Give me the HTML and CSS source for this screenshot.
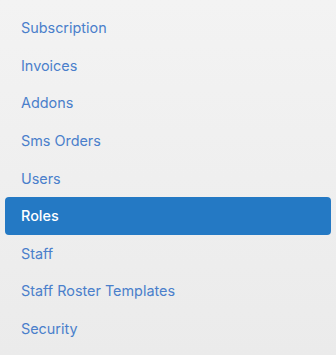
FILE: index.html
```html
<!DOCTYPE html>
<html lang="en">
<head>
    <meta charset="UTF-8">
    <meta name="viewport" content="width=device-width, initial-scale=1.0">
    <title>Settings</title>
    <link rel="stylesheet" href="styles.css">
</head>
<body>
    <nav class="side-menu">
        <a class="menu-item" href="#">Subscription</a>
        <a class="menu-item" href="#">Invoices</a>
        <a class="menu-item" href="#">Addons</a>
        <a class="menu-item" href="#">Sms Orders</a>
        <a class="menu-item" href="#">Users</a>
        <a class="menu-item active" href="#">Roles</a>
        <a class="menu-item" href="#">Staff</a>
        <a class="menu-item" href="#">Staff Roster Templates</a>
        <a class="menu-item" href="#">Security</a>
    </nav>
</body>
</html>
```

FILE: styles.css
```css
html, body {
    height: 100%;
}

body {
    margin: 0;
    font-family: Inter, "Noto Sans", Arial, sans-serif;
    background: linear-gradient(to bottom, #f3f3f3, #ebebeb);
}

.side-menu {
    display: flex;
    flex-direction: column;
    padding: 9.2px 5px 0 5px;
}

.menu-item {
    display: block;
    padding: 8px 16px;
    font-size: 14.4px;
    line-height: 21.6px;
    color: #4a7fcb;
    text-decoration: none;
    border-radius: 4px;
}

.menu-item.active {
    background-color: #2479c4;
    color: #ffffff;
    font-weight: 500;
}
```
